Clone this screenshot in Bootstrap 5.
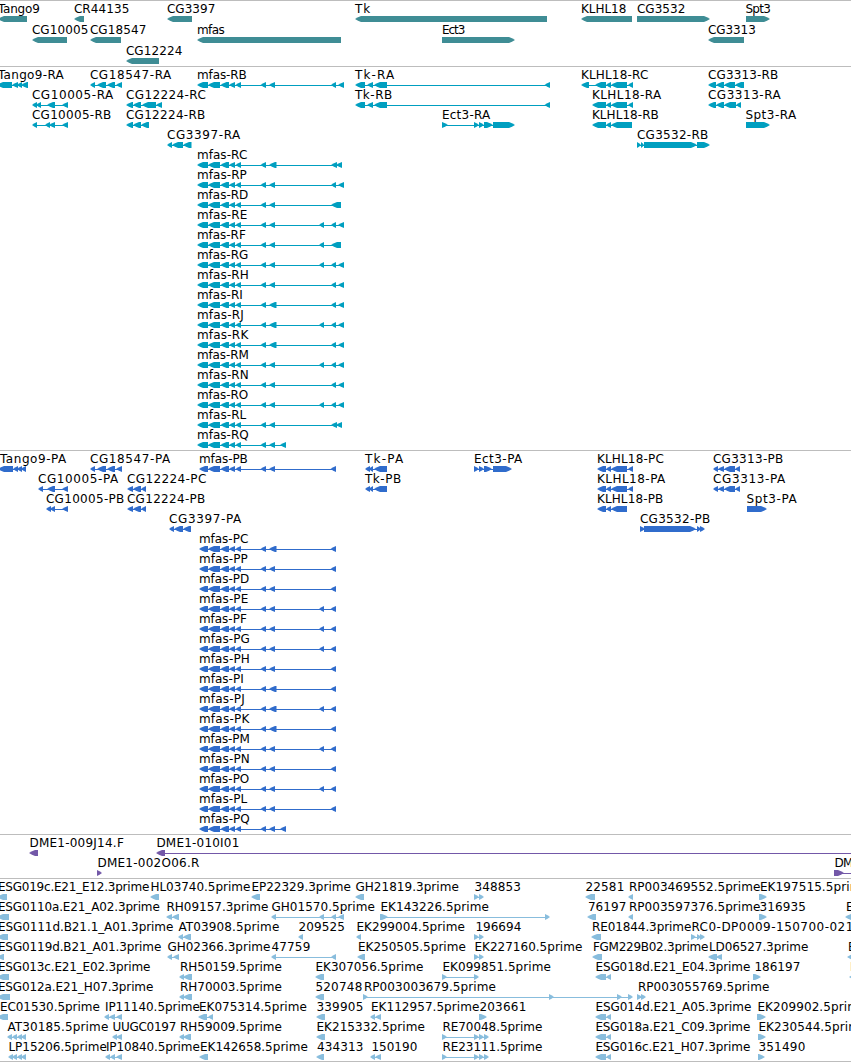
<!DOCTYPE html>
<html lang="en">
<head>
<meta charset="utf-8">
<meta name="viewport" content="width=device-width, initial-scale=1">
<title>Genome tracks</title>
<link rel="stylesheet" href="https://cdn.jsdelivr.net/npm/bootstrap@5.3.0/dist/css/bootstrap.min.css">
<style>
  body { background: #fff; color: #000; font-family: "DejaVu Sans", sans-serif; }
  .browser { height: 1062px; }
  .track { border-top: 1px solid #bdbdbd; padding-bottom: 3px; }
  .track-short { padding-bottom: 2px; }
  .track-end { border-bottom: 1px solid #bdbdbd; }
  .lane { height: 20px; overflow: visible; }
  .track-gene .lane { height: 21px; }
  .lane text { fill: #000; font-size: 12px; }
  .lane rect { shape-rendering: crispEdges; }
  .track-gene { color: #3f8d95; }
  .track-rna { color: #009fc0; }
  .track-cds { color: #306ccc; }
  .track-bac { color: #7358a8; }
  .track-est { color: #88bddd; }
</style>
</head>
<body>
<main class="browser container-fluid p-0 d-flex flex-column overflow-hidden">
  <section class="track track-short track-gene d-flex flex-column" id="gene"></section>
  <section class="track track-rna d-flex flex-column" id="rna"></section>
  <section class="track track-cds d-flex flex-column" id="cds"></section>
  <section class="track track-bac d-flex flex-column" id="bac"></section>
  <section class="track track-short track-end track-est d-flex flex-column" id="est"></section>
</main>
<script src="https://cdn.jsdelivr.net/npm/bootstrap@5.3.0/dist/js/bootstrap.bundle.min.js"></script>
<script>
// One lane per line, features separated by ";":
// label, label start, label end, strand, blocks as start:end
const mid = '208:220 220.5:229 229:235 235.5:241 260.5:266 ';
const R = '197:208 ' + mid, P = '199:208 ' + mid;
const n = '269:275 ', w = '269:276.5 ', up = '319:324 ', two = '331:336 338:344', pEnd = '330.5:336';
const data = {
gene: `Tango9,-2,39.5,<,-2:27;CR44135,74,129,<,74:84;CG3397,167,215,<,167:192;Tk,355,370,<,355:547;KLHL18,581,626,<,581:632;CG3532,637,685,>,637:710;Spt3,745.5,770.5,>,746:770
CG10005,32,88,<,32:67;CG18547,90,146,<,90:121;mfas,197,224.5,<,197:341;Ect3,442,465,>,442:515;CG3313,708,755.5,<,708:744
CG12224,126,182,<,126:159`,
rna: `Tango9-RA,-2,63.5,<,-3:12 12:18 17:22 21:28;CG18547-RA,90,171,<,90:95 97:106 107:115 116:122;mfas-RB,197,246.5,<,${R+n+two};Tk-RA,355,394,<,355:365 367:373 374:387 544.5:550;KLHL18-RC,581,648,<,581:589 595:606 606:611 611:627 628:633;CG3313-RB,708,778,<,708:716 716:724 724:735 735:744
CG10005-RA,32,113,<,32:37 36:41 47:55 62:68;CG12224-RC,126,205.5,<,126:133 133:141 142:156 156:162;Tk-RB,355,392,<,355:365 367:373 374:387 544.5:550;KLHL18-RA,592,661,<,592:606 606:611 611:627 628:633;CG3313-RA,708,780.5,<,708:716 716:724 724:736 736:741
CG10005-RB,32,111,<,32:37 45:50 49:55 62:68;CG12224-RB,126,205,<,126:133 133:141 141:149;Ect3-RA,442,490,>,442:448 474:479 479:484 484:493 493:515;KLHL18-RB,592,658.5,<,592:606 606:611 611:632;Spt3-RA,745.5,796,>,746:770
CG3397-RA,167,240,<,167:172 172:183 183:191.5;CG3532-RB,637,708,>,637:641 641:644 644:697 697:710
mfas-RC,197,247,<,${R+w}331:337 336:342
mfas-RP,197,246.5,<,${R+n+two}
mfas-RD,197,248,<,${R+n}331:341
mfas-RE,197,247,<,${R+n+up+two}
mfas-RF,197,245.5,<,${R+n+up}331:341
mfas-RG,197,248,<,${R+n+up+two}
mfas-RH,197,248.5,<,${R+n+two}
mfas-RI,197,242.5,<,${R+w+two}
mfas-RJ,197,243.5,<,${R+w+up+two}
mfas-RK,197,248,<,${R+w+two}
mfas-RM,197,248.5,<,${R+n+up+two}
mfas-RN,197,248.5,<,${R+n+two}
mfas-RO,197,248,<,${R+n+up+two}
mfas-RL,197,246,<,${R+n}331:337 336:342
mfas-RQ,197,248.5,<,${R+n}280:286`,
cds: `Tango9-PA,0,66,<,-2:13 13:18 17:22 21:26;CG18547-PA,90,170,<,90:95 97:106 107:115 116:122;mfas-PB,199,247.5,<,${P+n+pEnd};Tk-PA,365,403,<,365:370 369:373 374:387;Ect3-PA,474,522,>,474:479 479:484 484:492 493:512;KLHL18-PC,597,663.5,<,597:606 606:611 611:627 628:633;CG3313-PB,713,783,<,713:718 718:724 724:735 735:740
CG10005-PA,38,118,<,38:43 47:55 62:68;CG12224-PC,127,206,<,127:133 133:141 141:146;Tk-PB,365,401,<,365:370 369:373 374:387;KLHL18-PA,597,665,<,597:606 606:611 611:627 628:633;CG3313-PA,713,785,<,713:718 718:724 724:735 735:740
CG10005-PB,46,124,<,46:51 50:55 62:68;CG12224-PB,127,205,<,127:133 133:141 141:146;KLHL18-PB,597,663,<,597:606 606:611 611:627;Spt3-PA,746.5,796.5,>,747:767
CG3397-PA,169,241,<,169:174 174:183 183:191;CG3532-PB,640,710,>,640:645 644:696 697:701 700:705
mfas-PC,199,248,<,${P+w+pEnd}
mfas-PP,199,247.5,<,${P+n+pEnd}
mfas-PD,199,249,<,${P+n+pEnd}
mfas-PE,199,248,<,${P+n+up+pEnd}
mfas-PF,199,246.5,<,${P+n+up+pEnd}
mfas-PG,199,249.5,<,${P+n+up+pEnd}
mfas-PH,199,249.5,<,${P+n+pEnd}
mfas-PI,199,243.5,<,${P+w+pEnd}
mfas-PJ,199,244.5,<,${P+w+up+pEnd}
mfas-PK,199,249,<,${P+w+pEnd}
mfas-PM,199,249.5,<,${P+n+up+pEnd}
mfas-PN,199,249.5,<,${P+n+pEnd}
mfas-PO,199,249,<,${P+n+up+pEnd}
mfas-PL,199,247,<,${P+n+pEnd}
mfas-PQ,199,249.5,<,${P+n}280:286`,
bac: `DME1-009J14.F,29.5,123.5,<,29:38;DME1-010I01,156.5,239,<,156:165 870:880
DME1-002O06.R,97.5,199,>,97:102;DM,834.5,853,>,834:844 870:880`,
est: `ESG019c.E21_E12.3prime,-2,149,<,-3:7;HL03740.5prime,150.5,250,<,150:159;EP22329.3prime,251.5,350.5,<,251:260;GH21819.3prime,355.5,458.5,<,355:364;348853,474.5,520.5,>,474:479 479:484;22581,585.5,624,<,585:595;RP003469552.5prime,629,760,<,628:633;EK197515.5prime,760,868.5,>,759:767
ESG0110a.E21_A02.3prime,-2,159.5,<,-3:9;RH09157.3prime,166.5,268,<,166:172 172:179;GH01570.5prime,271.5,374.5,<,271:276 319:324 331:336 338:344;EK143226.5prime,380.5,488.5,>,380:388 545:550;76197,588,626,<,587:596;RP003597376.5prime,629,760,<,628:633;316935,759.5,805.5,>,759:767;E,846,852,<,845:853
ESG0111d.B21.1_A01.3prime,-2,173,<,-3:8;AT03908.5prime,178.5,279,<,178:183 183:191;209525,298.5,344.5,<,298:303;EK299004.5prime,356.5,464.5,<,356:361;196694,475.5,521,>,474:479 479:484;RE01844.3prime,592,691,<,591:601;RC0-DP0009-150700-021,691.5,853,>,691:696 697:701 700:705
ESG0119d.B21_A01.3prime,-2,161,<,-3:4;GH02366.3prime,167.5,270,<,167:172 173:179;47759,271.5,310,<,271:276 331:336;EK250505.5prime,358,465.5,<,357:365;EK227160.5prime,474.5,582,>,474:479 479:484;FGM229B02.3prime,593,708,<,592:602;LD06527.3prime,709,808,<,708:717 716:722;E,848,854,<,847:855
ESG013c.E21_E02.3prime,-2,150,<,-3:9;RH50159.5prime,180,281.5,<,179:184 183:192;EK307056.5prime,315.5,423,<,315:324;EK099851.5prime,442.5,550.5,>,442:447 474:479;ESG018d.E21_E04.3prime,595.5,750,<,595:606 606:611;186197,754.5,800,>,753:761;E,850,856,<,849:857
ESG012a.E21_H07.3prime,-2,153,<,-3:10;RH70003.5prime,180,281.5,<,179:184 183:192;520748,315.5,362,<,315:324;RP003003679.5prime,364,495.5,>,363:368 549:554 617:622 628:633;RP003055769.5prime,638,769,>,637:642 641:646
EC01530.5prime,0,99.5,<,-3:8;IP11140.5prime,105,199.5,<,104:109 109:115 116:122;EK075314.5prime,199,306.5,<,198:207 208:213;339905,316.5,363,<,316:325;EK112957.5prime,371,479,<,370:375 375:381;203661,479.5,526,>,479:487;ESG014d.E21_A05.3prime,595.5,751,<,595:606 606:611;EK209902.5prime,757.5,866,>,757:766
AT30185.5prime,7.5,108,<,7:12 12:17 17:22 21:26;UUGC0197,112.5,176,<,112:117 116:122;RH59009.5prime,180,281.5,<,179:184 183:191;EK215332.5prime,316.5,424.5,<,316:325;RE70048.5prime,442.5,542,>,442:447 474:479 479:484 484:489;ESG018a.E21_C09.3prime,595.5,750,<,595:606 606:611;EK230544.5prime,758.5,867,>,758:766
LP15206.5prime,8.5,106.5,<,8:13 12:17 17:22 21:26;IP10840.5prime,106,199.5,<,105:110 110:115 116:122;EK142658.5prime,200,307.5,<,199:208;434313,317,363,<,316:324;150190,371.5,417,<,370:375 375:381;RE23111.5prime,442.5,542,>,442:447 474:479 479:484 484:489;ESG016c.E21_H07.3prime,595.5,750,<,595:606 606:611;351490,758.5,805,>,758:765`
};

function feature(src) {
  const [label, x1, x2, strand, list] = src.split(',');
  const blocks = list.split(' ').map(b => b.split(':').map(Number));
  const first = blocks[0][0], last = blocks[blocks.length - 1][1];
  let out = `<text x="${+x1 - 0.1}" y="12" textLength="${x2 - x1 + 0.4}">${label}</text>`;
  if (blocks.length > 1)
    out += `<rect x="${first + 2}" y="18" width="${last - first - 4}" height="1" fill="currentColor"/>`;
  for (const [a, b] of blocks) {
    const h = Math.min(6, b - a);
    const tip = strand === '<' ? a : b, back = strand === '<' ? b : a, s = strand === '<' ? 1 : -1;
    out += `<path fill="currentColor" d="M${tip} 18L${tip + s * h * 0.5} 16.2L${tip + s * h} 15H${back}V21H${tip + s * h}L${tip + s * h * 0.5} 19.8Z"/>`;
  }
  return out;
}
for (const id in data)
  document.getElementById(id).innerHTML = data[id].split('\n')
    .map(line => `<svg class="lane w-100 flex-shrink-0">${line.split(';').map(feature).join('')}</svg>`).join('');
</script>
</body>
</html>
